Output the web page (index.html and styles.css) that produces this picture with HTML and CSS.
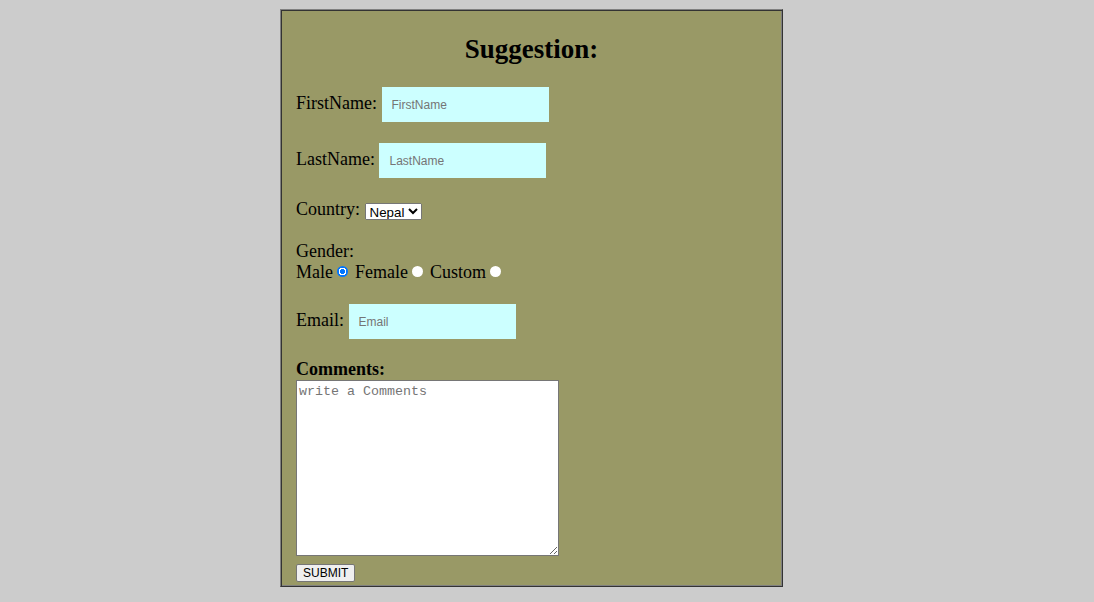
FILE: index.html
```html
<!DOCTYPE html>
<html>
<head>
<meta charset="utf-8">
<link rel="stylesheet" href="styles.css">
</head>
<body>
<form class="card">
  <h2 class="title">Suggestion:</h2>
  <div class="row">FirstName: <input class="field" type="text" placeholder="FirstName"></div>
  <div class="row">LastName: <input class="field" type="text" placeholder="LastName"></div>
  <div class="row">Country: <select class="sel"><option>Nepal</option><option>India</option></select></div>
  <div class="row">Gender:<br>Male <input class="radio" type="radio" name="g" checked> Female <input class="radio" type="radio" name="g"> Custom <input class="radio" type="radio" name="g"></div>
  <div class="row row-last">Email: <input class="field" type="email" placeholder="Email"></div>
  <div class="comments">
    <b class="clabel">Comments:</b>
    <textarea class="area" placeholder="write a Comments"></textarea>
    <button class="submit" type="button">SUBMIT</button>
  </div>
</form>
</body>
</html>
```
FILE: styles.css
```css
html, body {
  margin: 0;
  background: #cccccc;
}
body {
  font-family: "Liberation Serif", "Times New Roman", serif;
  font-size: 18px;
}
.card {
  box-sizing: border-box;
  width: 503px;
  height: 578px;
  margin: 9px 0 0 280px;
  padding: 2px 15px 0;
  background: #999966;
  border: 1px solid;
  border-color: #808080 #333333 #333333 #808080;
  box-shadow: inset 1px 1px 0 #333333, inset -1px -1px 0 #808080;
}
.title {
  font-size: 27px;
  text-align: center;
  margin: 22px 0 22px;
  line-height: 31px;
}
.row {
  margin-bottom: 21px;
  line-height: 21px;
}
.row-last {
  margin-bottom: 20px;
}
.field {
  box-sizing: border-box;
  width: 167px;
  height: 35px;
  padding: 0 10px;
  border: none;
  outline: none;
  background: #ccffff;
  font-family: "Liberation Sans", Arial, sans-serif;
  font-size: 12px;
  vertical-align: baseline;
}
.field::placeholder {
  color: #757575;
}
.sel {
  font-family: "Liberation Sans", Arial, sans-serif;
  font-size: 13.333px;
  height: 17px;
  padding: 0;
  vertical-align: -2px;
}
.radio {
  appearance: none;
  -webkit-appearance: none;
  width: 11px;
  height: 11px;
  margin: 0 2px 1px 0;
  border-radius: 50%;
  background: #ffffff;
  vertical-align: baseline;
}
.radio:checked {
  background: radial-gradient(circle, #0075ff 0 2.6px, #ffffff 2.8px 3.6px, #0075ff 3.8px);
}
.comments {
  line-height: 21px;
}
.clabel {
  display: block;
}
.area {
  display: block;
  box-sizing: border-box;
  width: 263px;
  height: 176px;
  margin: 0;
  padding: 3px 2px 2px;
  font-family: "Liberation Mono", "DejaVu Sans Mono", monospace;
  font-size: 13.333px;
  border: 1px solid #767676;
}
.submit {
  margin-top: 8px;
  padding: 1px 6px;
  height: 18px;
  line-height: 14px;
  font-family: "Liberation Sans", Arial, sans-serif;
  font-size: 12px;
  color: #000000;
  background: #efefef;
  border: 1px solid #767676;
  border-radius: 2px;
}
```
